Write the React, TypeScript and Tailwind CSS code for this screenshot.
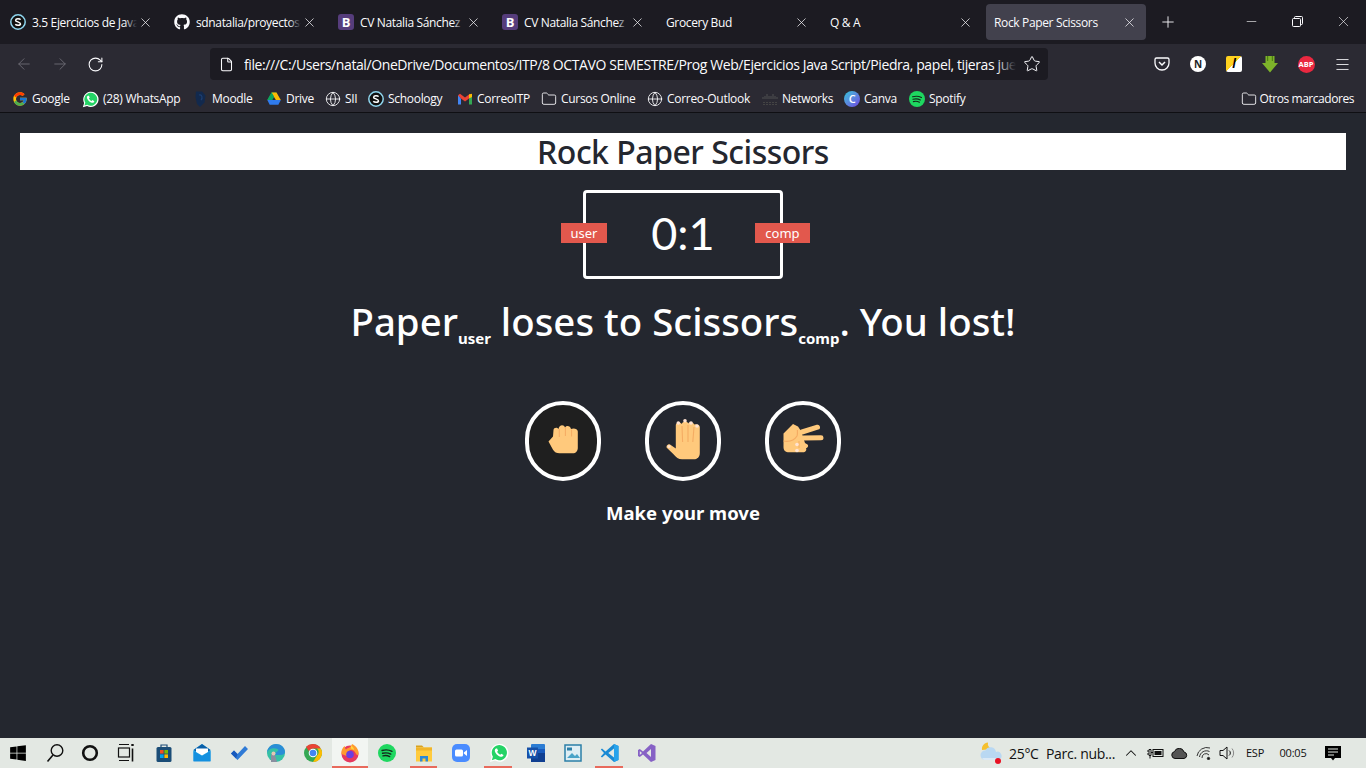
import React from "react";
import { FaGithub, FaWindows } from "react-icons/fa";
import { FcGoogle } from "react-icons/fc";
import { ArrowLeft, ArrowRight, RotateCw, File, Star, Menu, Globe, Folder, X, Plus, Minus, ChevronUp } from "lucide-react";

const ui = { fontFamily: '"Open Sans", "Noto Sans", sans-serif' };

function Schoology({ size = 16 }: { size?: number }) {
  return (
    <svg width={size} height={size} viewBox="0 0 16 16" className="shrink-0">
      <circle cx="8" cy="8" r="7.200" fill="#111" stroke="#8fd6ef" strokeWidth="1.500" />
      <path d="M10.600 5.600C9.800 4.600 5.800 4.200 5.600 6.200 5.400 8.200 10.600 7.600 10.500 9.900 10.400 11.900 6.200 11.500 5.300 10.300" fill="none" stroke="#fff" strokeWidth="1.500" />
    </svg>
  );
}

function BootstrapIcon() {
  return (
    <span className="w-4 h-4 shrink-0 rounded-[3px] bg-[#563d7c] text-white text-[13px] leading-4 font-bold text-center">B</span>
  );
}

function Tab({ title, icon, active, fade }: { title: string; icon?: React.ReactNode; active?: boolean; fade?: boolean }) {
  return (
    <div className={`relative w-[160px] h-9 shrink-0 flex items-center pl-2 gap-[6px] rounded-[4px] ${active ? "bg-[#42414d]" : ""}`}>
      {icon}
      <div className="relative flex-1 min-w-0 -mr-[5px] pt-[1px] overflow-hidden whitespace-nowrap text-[12px] tracking-[-0.35px] text-[#fbfbfe]">
        {title}
        {fade && <span className="absolute right-0 top-0 bottom-0 w-3 bg-gradient-to-r from-transparent to-[#1c1b22]" />}
      </div>
      <X size={15} strokeWidth={1.150} className="relative shrink-0 mr-[9px] text-[#fbfbfe]" />
    </div>
  );
}

function DriveIcon() {
  return (
    <svg width="16" height="16" viewBox="0 0 16 16" className="shrink-0">
      <path d="M5.500 1.500h5L6.300 9H1.300z" fill="#0fa45c" />
      <path d="M5.500 1.500h5l4.300 7.500h-5z" fill="#fbbc04" />
      <path d="M1.300 9h13.500l-2.400 4.700H3.700z" fill="#2f7bee" />
      <path d="M5.500 1.500 8 5.500 5.800 9H1.300z" fill="#0fa45c" />
    </svg>
  );
}

function GmailIcon() {
  return (
    <svg width="16" height="16" viewBox="0 0 16 16" className="shrink-0">
      <path d="M1 4v9.500h3V7.500z" fill="#4285f4" />
      <path d="M15 4v9.500h-3V7.500z" fill="#34a853" />
      <path d="M1 4.200 3 2.800 8 6.600l5-3.800 2 1.400L12 7.500 8 10.500 4 7.500z" fill="#ea4335" />
      <path d="M12 3.600 15 2.800V6l-3 1.500z" fill="#fbbc04" />
    </svg>
  );
}

function CiscoIcon() {
  return (
    <svg width="16" height="16" viewBox="0 0 16 16" className="shrink-0">
      <g stroke="#555" strokeWidth="0.900">
        <path d="M1 6v2M3 5v3M5 3v5M7 5v3M9 5v3M11 3v5M13 5v3M15 6v2" />
      </g>
      <path d="M1 11.500h14M1 13.500h14" stroke="#444" strokeWidth="1.200" strokeDasharray="2 1" />
    </svg>
  );
}

function CanvaIcon() {
  return (
    <span className="w-4 h-4 shrink-0 rounded-full bg-gradient-to-br from-[#1fc4d8] to-[#6a3ee0] text-white text-[11px] leading-4 text-center font-semibold">C</span>
  );
}

function MoodleIcon() {
  return (
    <svg width="14" height="18" viewBox="0 0 14 18" className="shrink-0">
      <path d="M2 1.500h6l3.500 4-1 7L6 17l-3-3-1.500-7z" fill="#12294d" />
      <path d="M5 5c3-1 4 3 2 5" fill="none" stroke="#1d3f73" strokeWidth="1.200" />
    </svg>
  );
}

function WhatsAppIcon({ size = 17, ring = "#fff" }: { size?: number; ring?: string }) {
  return (
    <svg width={size} height={size} viewBox="0 0 20 20" className="shrink-0">
      <path d="M1 19l1.500-5A9 9 0 1 1 6 17.600z" fill={ring} />
      <path d="M2.800 17.200l1.100-3.500A7.600 7.600 0 1 1 6.300 16.100z" fill="#25d366" />
      <path d="M7 5.500c-1.500.7-1.500 2.500-.5 4.300 1.200 2 3 3.500 5 4 1.500.3 2.800-.5 3-1.800l-2.200-1.300-1 1c-1.300-.5-2.500-1.700-3.200-3l1-1-1-2.200z" fill="#fff" />
    </svg>
  );
}

function SpotifyIcon({ size = 16 }: { size?: number }) {
  return (
    <svg width={size} height={size} viewBox="0 0 20 20" className="shrink-0">
      <circle cx="10" cy="10" r="10" fill="#1ed760" />
      <path d="M4.500 7.200c4-1.100 7.800-.8 11 1M5 10.300c3.400-.9 6.500-.6 9.200.9M5.500 13.200c2.800-.7 5.300-.4 7.500.8" fill="none" stroke="#14291c" strokeWidth="1.500" strokeLinecap="round" />
    </svg>
  );
}

const bookmarks: { icon: React.ReactNode; label: string; w: string }[] = [
  { icon: <FcGoogle size={16} className="shrink-0" />, label: "Google", w: "w-[70px]" },
  { icon: <WhatsAppIcon size={17} />, label: "(28) WhatsApp", w: "w-[112px]" },
  { icon: <MoodleIcon />, label: "Moodle", w: "w-[72px]" },
  { icon: <DriveIcon />, label: "Drive", w: "w-[59px]" },
  { icon: <Globe size={16} strokeWidth={1.300} className="shrink-0 text-[#fbfbfe]" />, label: "SII", w: "w-[43px]" },
  { icon: <Schoology />, label: "Schoology", w: "w-[89px]" },
  { icon: <GmailIcon />, label: "CorreoITP", w: "w-[84px]" },
  { icon: <Folder size={16} strokeWidth={1.300} className="shrink-0 text-[#fbfbfe]" />, label: "Cursos Online", w: "w-[106px]" },
  { icon: <Globe size={16} strokeWidth={1.300} className="shrink-0 text-[#fbfbfe]" />, label: "Correo-Outlook", w: "w-[115px]" },
  { icon: <CiscoIcon />, label: "Networks", w: "w-[82px]" },
  { icon: <CanvaIcon />, label: "Canva", w: "w-[65px]" },
  { icon: <SpotifyIcon size={16} />, label: "Spotify", w: "w-[60px]" },
];

function Fist() {
  return (
    <svg width="48" height="48" viewBox="0 0 48 48">
      <path d="M9.500 24.500 14 19.500 14.500 13c.3-2.500 3.500-3 5-1 .5-4.500 5.500-5 6.500-1.500 1-2.500 5.500-2 6 1.500 1.500-1 6.800-1 6.800 2.500V31c0 3-2 5.300-5 5.300H20.500c-3 0-5-1-6.500-3.500z" fill="#ffc97c" />
      <path d="M20.300 12v8M26.400 10v9M32.600 12.500v7" stroke="#f5ac63" strokeWidth="1" fill="none" />
    </svg>
  );
}

function OpenHand() {
  return (
    <svg width="48" height="48" viewBox="0 0 48 48">
      <path d="M16.800 8c0-3 5-3.500 6-1 .5-3 5.500-3.500 6.300-.5 1-2 5.500-1.500 6 1 1.500-.8 5.700-.3 5.700 2.500v26c0 4-2.500 6.300-6 6.300H23c-3.500 0-6-2-8.500-5L8 31c-1.500-1.500 1-4.500 3-3.500l5.800 4z" fill="#ffc97c" />
      <path d="M23 9l.6 16M29 8v17M35 10l-1.200 15" stroke="#f5ac63" strokeWidth="1.100" fill="none" />
      <g fill="#ffe3d2">
        <circle cx="19.300" cy="6" r="1.800" />
        <circle cx="26" cy="3.700" r="1.800" />
        <circle cx="32" cy="6" r="1.800" />
        <circle cx="38" cy="9" r="1.800" />
        <circle cx="10" cy="29.500" r="1.500" />
      </g>
    </svg>
  );
}

function ScissorsHand() {
  return (
    <svg width="48" height="48" viewBox="0 0 48 48">
      <path d="M4.500 16.500 14 7l5 2.500 3 4.500 4 12 2.500 1.500c1.500 1.500 0 3.500-1.500 3.500 1 2-.5 4-2 4.300H10c-3.500 0-5.500-2-5.500-5z" fill="#ffc97c" />
      <path d="M23 15 38.500 10.200M24 21 42 20.700" stroke="#ffc97c" strokeWidth="5" strokeLinecap="round" fill="none" />
      <path d="M4.500 24c6 1 11-1 13.500-5 .7-2 .5-4 .4-6" stroke="#f5ac63" strokeWidth="1.200" fill="none" />
      <path d="M20 24v7" stroke="#f5ac63" strokeWidth="1" fill="none" />
      <circle cx="18" cy="27.500" r="1.800" fill="#ffe3d2" />
      <circle cx="18" cy="33.500" r="1.800" fill="#ffe3d2" />
    </svg>
  );
}

function MoveBtn({ children, dark }: { children: React.ReactNode; dark?: boolean }) {
  return (
    <div className={`w-[76px] h-[80px] rounded-full border-4 border-white flex items-center justify-center ${dark ? "bg-[#1f1f1f]" : ""}`}>
      {children}
    </div>
  );
}

const page = { fontFamily: '"Noto Sans", "Open Sans", sans-serif' };

function TaskSlot({ w, active, bar, barCls, children }: { w: string; active?: boolean; bar?: boolean; barCls?: string; children: React.ReactNode }) {
  return (
    <div className={`relative ${w} h-full shrink-0 flex items-center justify-center ${active ? "bg-[#f2f5f2]" : ""}`}>
      {children}
      {bar && <span className={`absolute bottom-0 h-[2px] bg-[#e86a5c] ${barCls ?? "left-0 right-0"}`} />}
    </div>
  );
}

function Tray({ w, children }: { w: string; children: React.ReactNode }) {
  return <div className={`${w} h-full shrink-0 flex items-center justify-center`}>{children}</div>;
}

const S = 20;
const taskIcons = {
  search: (
    <svg width={S} height={S} viewBox="0 0 20 20"><circle cx="12" cy="7.500" r="5.800" fill="none" stroke="#111" strokeWidth="1.400" /><path d="M8 12 2.500 18.500" stroke="#111" strokeWidth="1.600" /></svg>
  ),
  cortana: (
    <svg width={S} height={S} viewBox="0 0 20 20"><circle cx="10" cy="10" r="6.800" fill="none" stroke="#111" strokeWidth="2.600" /></svg>
  ),
  view: (
    <svg width={S} height={S} viewBox="0 0 20 20" fill="none" stroke="#111" strokeWidth="1.200"><path d="M3 1.500h10M3 17.500h10" /><rect x="2.500" y="5" width="11" height="9" /><path d="M16.500 1v2" strokeWidth="2.400" /><path d="M16.500 5.500v13" strokeWidth="1.600" /></svg>
  ),
  store: (
    <svg width={S} height={S} viewBox="0 0 20 20"><path d="M7 4V2h6v2" fill="none" stroke="#1e4d78" strokeWidth="1.200" /><rect x="2.500" y="4" width="15" height="15" rx="1.500" fill="#1b4d77" /><rect x="6" y="7" width="3.600" height="3.600" fill="#f25022" /><rect x="10.400" y="7" width="3.600" height="3.600" fill="#7fba00" /><rect x="6" y="11.400" width="3.600" height="3.600" fill="#00a4ef" /><rect x="10.400" y="11.400" width="3.600" height="3.600" fill="#ffb900" /></svg>
  ),
  mail: (
    <svg width={S} height={S} viewBox="0 0 20 20"><path d="M1.500 7 10 1l8.500 6v11h-17z" fill="#28a8ea" /><path d="M1.500 7 10 1l8.500 6L10 12z" fill="#0a5fa8" /><path d="M4 5.500h12v3.500l-6 3.500L4 9z" fill="#fff" /><path d="M1.500 8 10 13l8.500-5v10.500h-17z" fill="#1490df" /></svg>
  ),
  todo: (
    <svg width={S} height={S} viewBox="0 0 20 20"><path d="M2 10.500 5 7.500 8.500 11l7.500-8 3 3-10.500 11z" fill="#2f7bd6" /><path d="M2 10.500 5 7.500 8.500 11 7 15.500z" fill="#185abd" /></svg>
  ),
  edge: (
    <svg width={S} height={S} viewBox="0 0 20 20"><circle cx="10" cy="10" r="9" fill="#35c1a5" /><path d="M1 10C1 5 5 1 10 1c5 0 9 3.500 9 8 0 2-2 3-4.500 3H9c0-3 3-3.500 3.500-5C11 4.500 3 4 1 10z" fill="#2a8ed6" /><path d="M5 12c1-1.500 3-1.500 4 0l2 7H5z" fill="#8a8fa0" /><circle cx="7.500" cy="10.500" r="2" fill="#e6c7b3" /></svg>
  ),
  chrome: (
    <svg width={S} height={S} viewBox="0 0 20 20"><circle cx="10" cy="10" r="9" fill="#34a853" /><path d="M10 1a9 9 0 0 1 7.800 4.500H10a4.500 4.500 0 0 0-4.100 2.700L3 3.700A9 9 0 0 1 10 1z" fill="#ea4335" /><path d="M17.800 5.500A9 9 0 0 1 10 19l4-6.500a4.500 4.500 0 0 0 0-7z" fill="#fbbc04" /><circle cx="10" cy="10" r="4.300" fill="#fff" /><circle cx="10" cy="10" r="3.300" fill="#4285f4" /></svg>
  ),
  firefox: (
    <svg width={S} height={S} viewBox="0 0 20 20"><circle cx="10" cy="11" r="8.500" fill="#e6395f" /><path d="M1.500 11C1 7 3 4 5 3c-.5 2 .5 3 1 3.500C8 4.500 11 5 12 1c4 2 7 5.500 6.500 10-.5 2-2 1-3-1-1-2.500-3-3.500-5-3-3 1-4 4-2.500 6.500z" fill="#ff9a2e" /><circle cx="10" cy="11.500" r="3.800" fill="#6a3ee0" /><path d="M11 2c1.500 1.500 3 3 3 5l-3-1.500z" fill="#ffd33d" /></svg>
  ),
  spotify: <SpotifyIcon size={18} />,
  explorer: (
    <svg width={S} height={S} viewBox="0 0 20 20"><path d="M2 2.500h6l2 2H2z" fill="#d8a11f" /><rect x="2" y="4.500" width="16" height="14" fill="#ffcb3d" /><rect x="2" y="4.500" width="16" height="3" fill="#f0b429" /><path d="M6 18.500V13h8v5.500h-2.500V15.500h-3v3z" fill="#2b88d8" /></svg>
  ),
  zoom: (
    <svg width={S} height={S} viewBox="0 0 20 20"><rect x="1" y="1" width="18" height="18" rx="5" fill="#4a8cff" /><rect x="4" y="6.500" width="8" height="7" rx="1.500" fill="#fff" /><path d="M12.800 9.500 16 7v6l-3.200-2.500z" fill="#fff" /></svg>
  ),
  whatsapp: <WhatsAppIcon size={20} />,
  word: (
    <svg width={S} height={S} viewBox="0 0 20 20"><rect x="5" y="1" width="14" height="18" rx="1" fill="#2b7cd3" /><rect x="5" y="10" width="14" height="9" fill="#103f91" /><rect x="5" y="6" width="14" height="4" fill="#185abd" /><rect x="1" y="4.500" width="11" height="11" fill="#1650a8" /><text x="6.500" y="13" textAnchor="middle" fontSize="8.500" fontWeight="700" fill="#fff" fontFamily="Liberation Sans, sans-serif">W</text></svg>
  ),
  photos: (
    <svg width={S} height={S} viewBox="0 0 20 20"><rect x="2" y="2" width="16" height="16" fill="#dfeef4" stroke="#2b7fa8" strokeWidth="1.500" /><rect x="4" y="4.500" width="5" height="3" fill="#2b7fa8" /><path d="M4 15 9 10l3 3 2-2 3 4z" fill="#4aa3c8" /></svg>
  ),
  vscode: (
    <svg width={S} height={S} viewBox="0 0 20 20"><path d="M14 1 18.500 3v14L14 19 5.500 11.500 2 14.500 .800 13.500 4 10 .800 6.500 2 5.500l3.500 3z" fill="#1a8ad4" /><path d="M14 5.500 8.300 10l5.700 4.500z" fill="#e3e8e3" /><path d="M14 1 18.500 3v14L14 19z" fill="#27a3ec" /></svg>
  ),
  vs: (
    <svg width={S} height={S} viewBox="0 0 20 20"><path d="M14 1 18.500 3v14L14 19 6 11.500 2.800 14 1 13V7l1.800-1L6 8.500z" fill="#8661c5" /><path d="M14 6 9.500 10l4.500 4z" fill="#e3e8e3" /><path d="M2.800 8v4L5 10z" fill="#e3e8e3" /></svg>
  ),
};

export default function App() {
  return (
    <div className="h-screen w-full flex flex-col overflow-hidden bg-[#24272f]" style={ui}>
      {/* tab strip */}
      <div className="h-11 shrink-0 bg-[#1c1b22] flex items-center pl-[2px] gap-1">
        <Tab title="3.5 Ejercicios de Java" icon={<Schoology />} fade />
        <Tab title="sdnatalia/proyectos-" icon={<FaGithub size={16} color="#fbfbfe" className="shrink-0" />} fade />
        <Tab title="CV Natalia Sánchez" icon={<BootstrapIcon />} fade />
        <Tab title="CV Natalia Sánchez" icon={<BootstrapIcon />} fade />
        <Tab title="Grocery Bud" />
        <Tab title="Q & A" />
        <Tab title="Rock Paper Scissors" active />
        <div className="w-[39px] flex justify-center -ml-[2px]"><Plus size={18} strokeWidth={1.200} className="text-[#fbfbfe]" /></div>
        <div className="flex-1" />
        <div className="flex items-center text-[#fbfbfe] h-full pb-[2px]">
          <div className="w-[46px] flex justify-center"><Minus size={15} strokeWidth={1} /></div>
          <div className="w-[46px] flex justify-center">
            <svg width="11" height="11" viewBox="0 0 11 11" fill="none" stroke="#fbfbfe" strokeWidth="1"><rect x="0.500" y="2.500" width="8" height="8" rx="1" /><path d="M2.500 2.500V1.500a1 1 0 0 1 1-1h6a1 1 0 0 1 1 1v6a1 1 0 0 1-1 1h-1" /></svg>
          </div>
          <div className="w-[46px] flex justify-center"><X size={17} strokeWidth={0.900} /></div>
        </div>
      </div>

      {/* toolbar */}
      <div className="h-10 shrink-0 bg-[#2b2a33] flex items-center">
        <div className="w-[210px] shrink-0 flex items-center pl-[15px] gap-[18px]">
          <ArrowLeft size={18} strokeWidth={1.200} className="text-[#6d6c75]" />
          <ArrowRight size={18} strokeWidth={1.200} className="text-[#6d6c75]" />
          <RotateCw size={17} strokeWidth={1.500} className="text-[#fbfbfe]" />
        </div>
        <div className="w-[838px] h-8 shrink-0 rounded-[4px] bg-[#1c1b22] flex items-center pl-[9px] pr-[7px]">
          <File size={15} strokeWidth={1.700} className="shrink-0 text-[#fbfbfe]" />
          <div className="relative ml-[10px] w-[772px] overflow-hidden whitespace-nowrap text-[14px] tracking-[-0.4px] text-[#fbfbfe]">
            file:///C:/Users/natal/OneDrive/Documentos/ITP/8 OCTAVO SEMESTRE/Prog Web/Ejercicios Java Script/Piedra, papel, tijeras jueg
            <span className="absolute right-0 top-0 bottom-0 w-5 bg-gradient-to-r from-transparent to-[#1c1b22]" />
          </div>
          <Star size={18} strokeWidth={1.300} className="ml-auto shrink-0 text-[#fbfbfe]" />
        </div>
        <div className="flex-1 flex items-center justify-end pr-[6px]">
          <div className="w-9 flex justify-center">
            <svg width="16" height="16" viewBox="0 0 16 16" fill="none" stroke="#fbfbfe" strokeWidth="1.300"><path d="M2.500 2h11A1.500 1.500 0 0 1 15 3.500V7a7 7 0 0 1-14 0V3.500A1.500 1.500 0 0 1 2.500 2z" /><path d="M5 6l3 3 3-3" strokeWidth="1.500" /></svg>
          </div>
          <div className="w-9 flex justify-center">
            <span className="w-4 h-4 rounded-full bg-white text-[#222] text-[10px] leading-4 font-bold text-center">N</span>
          </div>
          <div className="w-9 flex justify-center">
            <span className="w-4 h-4 rounded-[2px] bg-gradient-to-br from-[#ffd21f] from-50% to-white to-50% text-black text-[12px] leading-4 font-bold italic text-center">l</span>
          </div>
          <div className="w-9 flex justify-center">
            <svg width="16" height="17" viewBox="0 0 16 17"><path d="M3.500 0h9v7H16l-8 9.500L0 7h3.500z" fill="#7db32a" /><path d="M5 0h1.200v5H5zM9.800 0H11v5H9.800z" fill="#4f7f14" /></svg>
          </div>
          <div className="w-9 flex justify-center">
            <span className="w-[17px] h-[17px] rounded-full bg-[#ea2840] text-white text-[7.500px] leading-[17px] font-bold text-center">ABP</span>
          </div>
          <div className="w-9 flex justify-center">
            <Menu size={17} strokeWidth={1.200} className="text-[#fbfbfe]" />
          </div>
        </div>
      </div>

      {/* bookmarks */}
      <div className="h-[29px] shrink-0 bg-[#2b2a33] border-b border-[#0f0f13] flex items-center pl-3 text-[12px] tracking-[-0.3px] text-[#fbfbfe] pt-[2px]">
        {bookmarks.map((b) => (
          <div key={b.label} className={`${b.w} shrink-0 flex items-center gap-[4px] whitespace-nowrap`}>
            {b.icon}
            <span>{b.label}</span>
          </div>
        ))}
        <div className="ml-auto pr-3 flex items-center gap-[3px] tracking-[-0.45px]">
          <Folder size={16} strokeWidth={1.300} className="text-[#fbfbfe]" />
          <span>Otros marcadores</span>
        </div>
      </div>

      {/* page */}
      <div className="flex-1 min-h-0 bg-[#24272f] flex flex-col items-center text-white pt-5 px-5" style={page}>
        <div className="w-full h-[37px] bg-white text-[#24272f] text-center text-[32px] leading-[37px] font-medium tracking-[-0.5px]">Rock Paper Scissors</div>
        <div className="relative mt-5 w-[200px] h-[89px] pb-[2px] border-[3px] border-white rounded-[4px] flex items-center justify-center text-[45px] leading-none font-normal" style={{ fontFamily: '"Lato", sans-serif' }}>
          0:1
          <span className="absolute left-[-25px] top-[30px] w-[46px] h-5 bg-[#e2584d] text-white text-[13px] font-normal leading-5 text-center" style={page}>user</span>
          <span className="absolute right-[-30px] top-[30px] w-[55px] h-5 bg-[#e2584d] text-white text-[13px] font-normal leading-5 text-center" style={page}>comp</span>
        </div>
        <div className="mt-4 h-[52px] text-[38.400px] leading-[52px] font-medium whitespace-nowrap">
          Paper<sub className="text-[15px] font-bold align-[-4px] leading-none">user</sub> loses to Scissors<sub className="text-[15px] font-bold align-[-4px] leading-none">comp</sub>. You lost!
        </div>
        <div className="mt-[54px] flex gap-[44px]">
          <MoveBtn dark><Fist /></MoveBtn>
          <MoveBtn><OpenHand /></MoveBtn>
          <MoveBtn><ScissorsHand /></MoveBtn>
        </div>
        <div className="mt-[18px] text-[18.500px] leading-[28px] font-bold">Make your move</div>
      </div>

      {/* taskbar */}
      <div className="h-[30px] shrink-0 bg-[#e3e8e3] flex items-center text-[#111]">
        <TaskSlot w="w-[36px]"><FaWindows size={18} color="#000" /></TaskSlot>
        <TaskSlot w="w-[37px]">{taskIcons.search}</TaskSlot>
        <TaskSlot w="w-[34px]">{taskIcons.cortana}</TaskSlot>
        <TaskSlot w="w-[37px]">{taskIcons.view}</TaskSlot>
        <TaskSlot w="w-[39px]">{taskIcons.store}</TaskSlot>
        <TaskSlot w="w-[37px]">{taskIcons.mail}</TaskSlot>
        <TaskSlot w="w-[37px]">{taskIcons.todo}</TaskSlot>
        <TaskSlot w="w-[37px]">{taskIcons.edge}</TaskSlot>
        <TaskSlot w="w-[38px]">{taskIcons.chrome}</TaskSlot>
        <TaskSlot w="w-[36px]" active bar>{taskIcons.firefox}</TaskSlot>
        <TaskSlot w="w-[37px]">{taskIcons.spotify}</TaskSlot>
        <TaskSlot w="w-[37px]" bar barCls="left-[5px] right-[5px]">{taskIcons.explorer}</TaskSlot>
        <TaskSlot w="w-[38px]">{taskIcons.zoom}</TaskSlot>
        <TaskSlot w="w-[37px]" bar barCls="left-[4px] right-[5px]">{taskIcons.whatsapp}</TaskSlot>
        <TaskSlot w="w-[37px]">{taskIcons.word}</TaskSlot>
        <TaskSlot w="w-[37px]">{taskIcons.photos}</TaskSlot>
        <TaskSlot w="w-[37px]" bar barCls="left-[4px] right-[5px]">{taskIcons.vscode}</TaskSlot>
        <TaskSlot w="w-[37px]">{taskIcons.vs}</TaskSlot>
        <div className="flex-1" />
        <div className="flex items-center h-full pr-[13px]">
          <div className="w-[30px] h-full shrink-0 flex items-center">
            <svg width="24" height="24" viewBox="0 0 24 24"><path d="M9 1.500A5.500 5.500 0 0 0 13 8L3 9C2.500 5 5 2 9 1.500z" fill="#f5c02e" /><path d="M1.500 14a4.500 4.500 0 0 1 5-4.500 5.500 5.500 0 0 1 10.500 1.500 4 4 0 0 1 3 7.500H5c-2 0-3.500-2-3.500-4.500z" fill="#b9d8f2" /><path d="M3 17h15v2H5z" fill="#dbe9f5" /><circle cx="19" cy="20" r="3" fill="#e81123" /></svg>
          </div>
          <span className="w-[37px] text-[14px] tracking-[-0.3px] whitespace-nowrap">25°C</span>
          <span className="w-[73px] text-[14px] tracking-[-0.3px] whitespace-nowrap">Parc. nub...</span>
          <Tray w="w-[24px]"><ChevronUp size={18} strokeWidth={1.400} /></Tray>
          <Tray w="w-[24px]">
            <svg width="17" height="12" viewBox="0 0 17 12" fill="none" stroke="#111" strokeWidth="1"><rect x="6" y="2.500" width="10" height="7" /><rect x="7.500" y="4" width="7" height="4" fill="#111" stroke="none" /><path d="M0 4h2M0 7h2M2 2.500h2v6H2zM4 5.500h2M3 8.500v3" /></svg>
          </Tray>
          <Tray w="w-[24px]">
            <svg width="17" height="11" viewBox="0 0 17 11"><path d="M4 10.500a3.500 3.500 0 0 1-.5-6.900A5 5 0 0 1 13 4a3.300 3.300 0 0 1 0 6.500z" fill="#555" stroke="#111" strokeWidth="1" /></svg>
          </Tray>
          <Tray w="w-[25px]">
            <svg width="15" height="14" viewBox="0 0 15 14" fill="none" stroke="#333" strokeWidth="1"><path d="M1 10a10 10 0 0 1 13-8M3.500 11a7 7 0 0 1 10-5.500M6 12a4 4 0 0 1 7-3" /><circle cx="12.500" cy="12.500" r="1.200" fill="#111" /></svg>
          </Tray>
          <Tray w="w-[23px]">
            <svg width="17" height="14" viewBox="0 0 17 14" fill="none" stroke="#111" strokeWidth="1"><path d="M1 4.500h3L8 1v12L4 9.500H1z" /><path d="M10 4.500a3 3 0 0 1 0 5" /><path d="M13 2.500a7 7 0 0 1 0 9" stroke="#888" /></svg>
          </Tray>
          <span className="w-[36px] text-center text-[11px] tracking-[-0.2px] -ml-[2px]">ESP</span>
          <span className="w-[40px] text-center text-[11px] tracking-[-0.2px]">00:05</span>
          <Tray w="w-[40px]">
            <svg width="16" height="16" viewBox="0 0 16 16"><path d="M0 1h16v12h-6l-2 2.500L6 13H0z" fill="#000" /><path d="M3 4h10M3 7h10M3 10h6" stroke="#e3e8e3" strokeWidth="1" /></svg>
          </Tray>
        </div>
      </div>
    </div>
  );
}
